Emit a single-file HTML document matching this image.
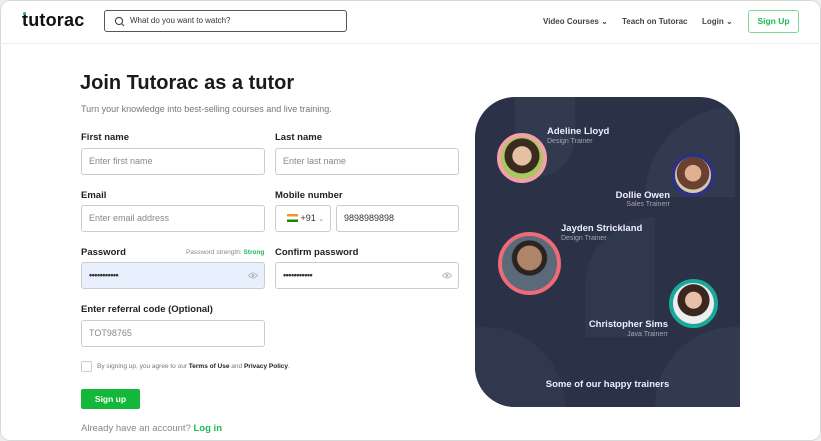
<!DOCTYPE html>
<html><head><meta charset="utf-8"><style>
*{box-sizing:border-box;margin:0;padding:0}
body{width:821px;height:441px;background:#eee;font-family:"Liberation Sans",sans-serif;position:relative;overflow:hidden}
.frame{position:absolute;left:0;top:0;width:821px;height:441px;background:#fff;box-shadow:inset 0 0 0 1px #d8d8d8;border-radius:10px;overflow:hidden}
.a{position:absolute}
.hdr{left:0;top:0;width:821px;height:44px;border-bottom:1px solid #ececec}
.lbl{font-size:9.5px;font-weight:bold;color:#222}
.inp{height:27px;border:1px solid #ccc;border-radius:3px;font-size:9px;color:#888;padding-left:7px;line-height:25px}
.nav{font-size:8px;font-weight:bold;color:#444;top:17px}
.av{border-radius:50%;border:4px solid}
.nm{font-size:9.5px;font-weight:bold;color:#eef}
.rl{font-size:7px;color:#a0a6b8}
</style></head><body><div class="frame">
<div class="a hdr"></div>
<div class="a" style="left:22px;top:10px;font-size:18px;font-weight:bold;color:#111;letter-spacing:0.2px">tutorac</div>
<div class="a" style="left:23px;top:12px;width:3px;height:3px;background:#1db954;border-radius:50%"></div>
<div class="a" style="left:104px;top:10px;width:243px;height:22px;border:1px solid #555;border-radius:3px"></div>
<svg class="a" style="left:114px;top:16px" width="11" height="11" viewBox="0 0 11 11"><circle cx="5" cy="5" r="3.6" fill="none" stroke="#444" stroke-width="1.1"/><path d="M7.6 7.6L10 10" stroke="#444" stroke-width="1.1"/></svg>
<div class="a" style="left:130px;top:16px;font-size:8px;color:#333">What do you want to watch?</div>
<div class="a nav" style="left:543px">Video Courses ⌄</div>
<div class="a nav" style="left:622px">Teach on Tutorac</div>
<div class="a nav" style="left:702px">Login ⌄</div>
<div class="a" style="left:748px;top:10px;width:51px;height:23px;border:1px solid #7fd69a;border-radius:3px;color:#1db954;font-size:8.5px;font-weight:bold;text-align:center;line-height:21px">Sign Up</div>

<div class="a" style="left:80px;top:72px;font-size:20px;font-weight:bold;color:#1a1a1a">Join Tutorac as a tutor</div>
<div class="a" style="left:81px;top:104px;font-size:9px;color:#777">Turn your knowledge into best-selling courses and live training.</div>

<div class="a lbl" style="left:81px;top:132px">First name</div>
<div class="a lbl" style="left:275px;top:132px">Last name</div>
<div class="a inp" style="left:81px;top:148px;width:184px">Enter first name</div>
<div class="a inp" style="left:275px;top:148px;width:184px">Enter last name</div>

<div class="a lbl" style="left:81px;top:190px">Email</div>
<div class="a lbl" style="left:275px;top:190px">Mobile number</div>
<div class="a inp" style="left:81px;top:205px;width:184px">Enter email address</div>
<div class="a inp" style="left:275px;top:205px;width:56px;color:#333;padding-left:11px"><span style="display:inline-block;width:11px;height:8px;vertical-align:-1px;background:linear-gradient(#f7931e 33%,#fff 33% 66%,#138808 66%)"></span> +91 <span style="color:#1db954;font-size:7px">⌄</span></div>
<div class="a inp" style="left:336px;top:205px;width:123px;color:#333">9898989898</div>

<div class="a lbl" style="left:81px;top:247px">Password</div>
<div class="a" style="left:186px;top:249px;font-size:6.5px;color:#888">Password strength: <b style="color:#1db954">Strong</b></div>
<div class="a lbl" style="left:275px;top:247px">Confirm password</div>
<div class="a inp" style="left:81px;top:262px;width:184px;background:#e8effd;color:#333;font-weight:bold;letter-spacing:-0.5px">•••••••••••</div>
<div class="a inp" style="left:275px;top:262px;width:184px;color:#333;font-weight:bold;letter-spacing:-0.5px">•••••••••••</div>
<svg class="a" style="left:248px;top:272px" width="10" height="7" viewBox="0 0 10 7"><path d="M0.5 3.5Q5 -1.5 9.5 3.5Q5 8.5 0.5 3.5Z" fill="none" stroke="#bbb"/><circle cx="5" cy="3.5" r="1.5" fill="#bbb"/></svg>
<svg class="a" style="left:442px;top:272px" width="10" height="7" viewBox="0 0 10 7"><path d="M0.5 3.5Q5 -1.5 9.5 3.5Q5 8.5 0.5 3.5Z" fill="none" stroke="#bbb"/><circle cx="5" cy="3.5" r="1.5" fill="#bbb"/></svg>

<div class="a lbl" style="left:81px;top:304px">Enter referral code (Optional)</div>
<div class="a inp" style="left:81px;top:320px;width:184px">TOT98765</div>

<div class="a" style="left:81px;top:361px;width:11px;height:11px;border:1px solid #ccc;border-radius:2px"></div>
<div class="a" style="left:97px;top:363px;font-size:6.5px;color:#777">By signing up, you agree to our <b style="color:#222">Terms of Use</b> and <b style="color:#222">Privacy Policy</b>.</div>

<div class="a" style="left:81px;top:389px;width:59px;height:20px;background:#13b83a;border-radius:2px;color:#fff;font-size:8.5px;font-weight:bold;text-align:center;line-height:20px">Sign up</div>
<div class="a" style="left:81px;top:423px;font-size:9.5px;color:#888">Already have an account? <b style="color:#1db954">Log in</b></div>

<div class="a" style="left:475px;top:97px;width:265px;height:310px;background:#2b3247;border-radius:40px 40px 0 40px;overflow:hidden">
<div class="a" style="left:40px;top:0;width:60px;height:80px;background:#323a50;border-radius:0 0 40px 0"></div>
<div class="a" style="left:170px;top:10px;width:90px;height:90px;background:#323a50;border-radius:90px 0 0 0"></div>
<div class="a" style="left:110px;top:120px;width:70px;height:120px;background:#30384e;border-radius:70px 0 0 0"></div>
<div class="a" style="left:0;top:230px;width:90px;height:80px;background:#30384e;border-radius:0 80px 0 0"></div>
<div class="a" style="left:180px;top:230px;width:85px;height:80px;background:#323a50;border-radius:80px 0 0 0"></div>
</div>
<div class="a av" style="left:497px;top:133px;width:50px;height:50px;border-color:#f4a0a8;background:radial-gradient(circle at 50% 45%,#e6c0a4 30%,#3a2a20 32% 55%,#a8c860 57%)"></div>
<div class="a av" style="left:671px;top:153px;width:44px;height:44px;border-color:#2e3180;background:radial-gradient(circle at 50% 45%,#e0b090 30%,#6a4030 32% 60%,#d8c8b0 62%)"></div>
<div class="a av" style="left:498px;top:232px;width:63px;height:63px;border-color:#f06a78;background:radial-gradient(circle at 50% 40%,#b08468 28%,#2a2420 30% 40%,#5a6a78 42%)"></div>
<div class="a av" style="left:669px;top:279px;width:49px;height:49px;border-color:#1aa89a;background:radial-gradient(circle at 50% 42%,#e8c0a8 26%,#3a2820 28% 50%,#eeeeee 52%)"></div>
<div class="a nm" style="left:547px;top:126px">Adeline Lloyd</div>
<div class="a rl" style="left:547px;top:138px">Design Trainer</div>
<div class="a nm" style="left:590px;top:190px;width:80px;text-align:right">Dollie Owen</div>
<div class="a rl" style="left:590px;top:201px;width:80px;text-align:right">Sales Trainerr</div>
<div class="a nm" style="left:561px;top:223px">Jayden Strickland</div>
<div class="a rl" style="left:561px;top:235px">Design Trainer</div>
<div class="a nm" style="left:568px;top:319px;width:100px;text-align:right">Christopher Sims</div>
<div class="a rl" style="left:568px;top:331px;width:100px;text-align:right">Java Trainerr</div>
<div class="a" style="left:475px;top:379px;width:265px;text-align:center;font-size:9.5px;font-weight:bold;color:#eef">Some of our happy trainers</div>
</div></body></html>
